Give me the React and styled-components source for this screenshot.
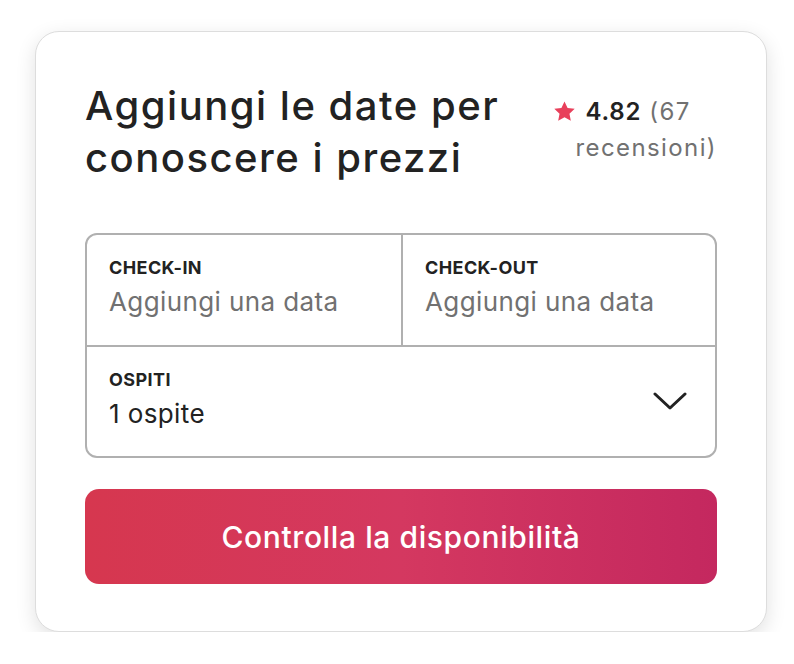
import React from "react";
import styled, { createGlobalStyle } from "styled-components";

const GlobalStyle = createGlobalStyle`
  body {
    margin: 0;
    background: #ffffff;
    font-family: Inter, "Noto Sans", sans-serif;
    color: #222222;
  }
`;

const Page = styled.div`
  padding: 31px 0 0 35px;
`;

const Card = styled.div`
  box-sizing: border-box;
  width: 732px;
  height: 601px;
  padding: 48px 49px;
  background: #ffffff;
  border: 1px solid #dddddd;
  border-radius: 24px;
  box-shadow: 0 6px 20px rgba(0, 0, 0, 0.12);
`;

const Header = styled.div`
  display: flex;
  justify-content: space-between;
  align-items: flex-start;
`;

const Title = styled.h2`
  margin: 0;
  font-size: 40px;
  line-height: 52px;
  font-weight: 500;
  letter-spacing: 1.5px;
  color: #222222;
`;

const Rating = styled.div`
  margin-top: 14px;
  padding-left: 22px;
  text-indent: -22px;
  font-size: 24px;
  line-height: 36px;
  letter-spacing: 1.4px;
  color: #717171;
`;

const Star = styled.svg`
  width: 23px;
  height: 23px;
  margin-right: 9px;
  vertical-align: -3px;
  fill: #e8405b;
`;

const Score = styled.span`
  font-weight: 600;
  letter-spacing: 0.8px;
  color: #222222;
`;

const Picker = styled.div`
  margin-top: 49px;
  border: 2px solid #b0b0b0;
  border-radius: 12px;
  overflow: hidden;
`;

const DateRow = styled.div`
  display: grid;
  grid-template-columns: 1fr 1fr;
  border-bottom: 2px solid #b0b0b0;
`;

const Field = styled.div`
  box-sizing: border-box;
  height: 110px;
  padding: 22px 22px 0;
  border-left: ${(p) => (p.divided ? "2px solid #b0b0b0" : "none")};
`;

const GuestsField = styled.div`
  box-sizing: border-box;
  height: 109px;
  padding: 22px 28px 0 22px;
  display: flex;
  justify-content: space-between;
  align-items: flex-start;
`;

const Label = styled.div`
  font-size: 18px;
  line-height: 22px;
  font-weight: 700;
  letter-spacing: 0.4px;
  color: #222222;
`;

const Value = styled.div`
  margin-top: 7px;
  font-size: 26px;
  line-height: 32px;
  letter-spacing: 0.4px;
  color: ${(p) => (p.filled ? "#222222" : "#717171")};
`;

const Chevron = styled.svg`
  width: 34px;
  height: 18px;
  margin-top: 23px;
  fill: none;
  stroke: #222222;
  stroke-width: 3;
  stroke-linecap: round;
  stroke-linejoin: round;
`;

const CheckButton = styled.button`
  display: block;
  width: 100%;
  height: 95px;
  margin-top: 31px;
  border: none;
  border-radius: 14px;
  background: linear-gradient(to right, #d6374f 0%, #d43860 50%, #c4285f 100%);
  color: #ffffff;
  font-family: Inter, "Noto Sans", sans-serif;
  font-size: 30px;
  font-weight: 500;
  letter-spacing: 0.6px;
  cursor: pointer;
`;

export default function App() {
  return (
    <>
      <GlobalStyle />
      <Page>
        <Card>
          <Header>
            <Title>
              Aggiungi le date per
              <br />
              conoscere i prezzi
            </Title>
            <Rating>
              <Star viewBox="0 0 32 32">
                <path d="M16 2l4.3 9.1 9.9 1.2-7.3 6.9 1.9 9.8L16 24.1l-8.8 4.9 1.9-9.8-7.3-6.9 9.9-1.2z" />
              </Star>
              <Score>4.82</Score> (67
              <br />
              recensioni)
            </Rating>
          </Header>
          <Picker>
            <DateRow>
              <Field>
                <Label>CHECK-IN</Label>
                <Value>Aggiungi una data</Value>
              </Field>
              <Field divided>
                <Label>CHECK-OUT</Label>
                <Value>Aggiungi una data</Value>
              </Field>
            </DateRow>
            <GuestsField>
              <div>
                <Label>OSPITI</Label>
                <Value filled>1 ospite</Value>
              </div>
              <Chevron viewBox="0 0 34 18">
                <path d="M2 2l15 14 15-14" />
              </Chevron>
            </GuestsField>
          </Picker>
          <CheckButton>Controlla la disponibilità</CheckButton>
        </Card>
      </Page>
    </>
  );
}
